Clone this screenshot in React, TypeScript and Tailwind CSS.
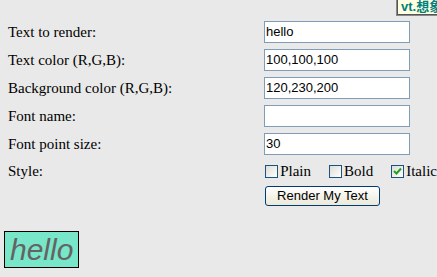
import React from "react";

const serif = { fontFamily: '"Liberation Serif", "Times New Roman", serif' };

function Field({ label, value }: { label: string; value: string }) {
  return (
    <div className="flex h-[28px] items-center">
      <div className="w-[256px] text-[15px] text-black">{label}</div>
      <div className="flex h-[22px] w-[146px] items-center border border-[#7f9db9] bg-white px-[1px] font-['Liberation_Sans',Arial,sans-serif] text-[13px] text-black">
        {value}
      </div>
    </div>
  );
}

function Check({ label, checked }: { label: string; checked?: boolean }) {
  return (
    <div className="flex items-center">
      <div className="ml-[4px] mr-[2px] flex h-[13px] w-[13px] items-center justify-center border border-[#1c5180] bg-gradient-to-br from-[#dcdcd7] to-white">
        {checked && (
          <svg width="9" height="9" viewBox="0 0 9 9">
            <path d="M1 4 L3.5 6.5 L8 1.5" fill="none" stroke="#21a121" strokeWidth="2" />
          </svg>
        )}
      </div>
      <span className="text-[15px] text-black">{label}</span>
    </div>
  );
}

export default function App() {
  return (
    <div className="relative h-[277px] w-[437px] overflow-hidden bg-[#e9e9e9]" style={serif}>
      {/* tooltip in the corner */}
      <div className="absolute -top-[6px] left-[397px] flex h-[21px] w-[60px] items-end border border-[#555] bg-[#ffffe1] pb-[1px] pl-[3px] font-['Liberation_Sans','Noto_Sans_CJK_SC',sans-serif] text-[13px] font-bold leading-none text-[#008080] shadow-[-1px_1px_0_#888]">
        vt.想象
      </div>

      <div className="flex flex-col pl-[8px] pt-[18px]">
        <Field label="Text to render:" value="hello" />
        <Field label="Text color (R,G,B):" value="100,100,100" />
        <Field label="Background color (R,G,B):" value="120,230,200" />
        <Field label="Font name:" value="" />
        <Field label="Font point size:" value="30" />

        <div className="flex h-[26px] items-center">
          <div className="w-[256px] text-[15px] text-black">Style:</div>
          <div className="flex items-center gap-[14px]">
            <Check label="Plain" />
            <Check label="Bold" />
            <Check label="Italic" checked />
          </div>
        </div>

        <div className="flex h-[24px] items-center pl-[257px]">
          <button className="flex h-[20px] w-[115px] items-center justify-center rounded-[3px] border border-[#003c74] bg-gradient-to-b from-white to-[#ece9d8] font-['Liberation_Sans',Arial,sans-serif] text-[13px] text-black">
            Render My Text
          </button>
        </div>
      </div>

      <div className="ml-[4px] mt-[23px] flex h-[37px] w-[75px] items-center border border-black bg-[#78e6c8] pl-[5px] font-['Liberation_Sans',Arial,sans-serif] text-[30px] italic leading-[35px] text-[#646464]">
        hello
      </div>
    </div>
  );
}
